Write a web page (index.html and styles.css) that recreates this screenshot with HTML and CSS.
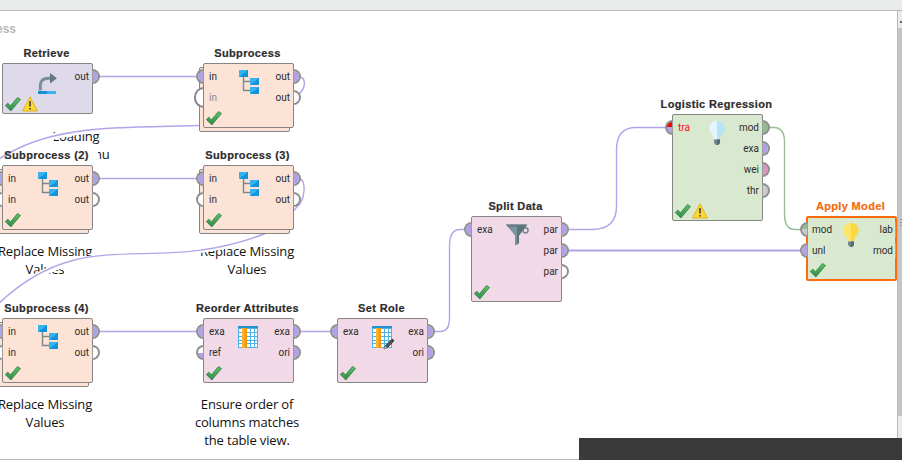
FILE: index.html
```html
<!DOCTYPE html>
<html lang="en">
<head>
<meta charset="utf-8">
<title>Process canvas</title>
<link rel="stylesheet" href="styles.css">
</head>
<body>
<svg class="defs" width="0" height="0" aria-hidden="true">
  <defs>
    <linearGradient id="blue" x1="0" y1="0" x2="1" y2="1"><stop offset=".5" stop-color="#35b3ee"/><stop offset=".5" stop-color="#1394d9"/></linearGradient>
    <linearGradient id="green" x1="0" y1="0" x2="0" y2="1"><stop offset="0" stop-color="#5cc466"/><stop offset="1" stop-color="#338a48"/></linearGradient>
    <symbol id="tree" viewBox="0 0 24 26">
      <path d="M7.5 7v14.5H15M7.5 12.5H15" fill="none" stroke="#7c878c" stroke-width="1.4"/>
      <path d="M3 1h9v7H3z" fill="url(#blue)"/><path d="M14 9h9v7h-9z" fill="url(#blue)"/><path d="M14 18h9v7h-9z" fill="url(#blue)"/>
    </symbol>
    <symbol id="retrieve" viewBox="0 0 24 26">
      <path d="M5.300 21.500v-4.500q0-7.800 8-7.800h2.700" fill="none" stroke="#7b8f99" stroke-width="3"/>
      <path d="M15 4l7 5.200-7 5.200z" fill="#647883"/>
      <path d="M3 22h9v3H3z" fill="#1690d5"/><path d="M12 22h9v3h-9z" fill="#3fb1ed"/>
    </symbol>
    <symbol id="table" viewBox="0 0 24 26">
      <path d="M2 2h20v22H2z" fill="#4db4ea"/><path d="M2 2h20v2H2z" fill="#2393cf"/>
      <g fill="#fff"><path d="M3 5h3v3H3zM3 9h3v3H3zM3 13h3v3H3zM3 17h3v2H3zM3 20h3v3H3z"/><path d="M11 5h3v3h-3zM15 5h3v3h-3zM19 5h2v3h-2zM11 9h3v3h-3zM15 9h3v3h-3zM19 9h2v3h-2zM11 13h3v3h-3zM15 13h3v3h-3zM19 13h2v3h-2zM11 17h3v2h-3zM15 17h3v2h-3zM19 17h2v2h-2zM11 20h3v3h-3zM15 20h3v3h-3zM19 20h2v3h-2z"/></g>
      <path d="M6 4h5v20H6z" fill="#f89a0c"/><path d="M6 4h2.500v20H6z" fill="#fdb12c"/>
    </symbol>
    <symbol id="pencil" viewBox="0 0 12 12">
      <path d="M1 11l1.500-3.500L8.500 1.500l2 2L4.500 9.500z" fill="#56565a" stroke="#333" stroke-width=".8"/><path d="M8.500 1.500l1-.8 1.700 1.600-.7 1.200z" fill="#3a3a3a"/><path d="M1 11l1.200-2.700 1.500 1.500z" fill="#ddd"/>
    </symbol>
    <symbol id="funnel" viewBox="0 0 26 26">
      <circle cx="21.500" cy="8.300" r="2.600" fill="none" stroke="#73878f" stroke-width="1.500"/>
      <path d="M2 2.500H23L15 13.500V21L11 23.800V13.500z" fill="#7b939d"/><path d="M13 3h10l-8 10.500V21L13 22.400z" fill="#5d747e"/><path d="M2 2.500H23l-1.500 2H3.500z" fill="#637983"/>
    </symbol>
    <symbol id="bulb-off" viewBox="0 0 24 26">
      <path d="M12 1C7 1 4.300 4.500 4.300 8.500c0 4.500 4.200 5.500 4.500 10.500H12z" fill="#e3f5fd"/><path d="M12 1c5 0 7.700 3.500 7.700 7.500 0 4.500-4.200 5.500-4.500 10.500H12z" fill="#b5e3f8"/>
      <path d="M9 19.500h6v3.500l-2 2h-2l-2-2z" fill="#71868f"/><path d="M12 19.500h3v3.500l-2 2h-1z" fill="#536872"/>
    </symbol>
    <symbol id="bulb-on" viewBox="0 0 24 26">
      <path d="M12 1C7 1 4.300 4.500 4.300 8.500c0 4.500 4.200 5.500 4.500 10.500H12z" fill="#fee567"/><path d="M12 1c5 0 7.700 3.500 7.700 7.500 0 4.500-4.200 5.500-4.500 10.500H12z" fill="#fbd842"/>
      <path d="M9 19.500h6v3.500l-2 2h-2l-2-2z" fill="#71868f"/><path d="M12 19.500h3v3.500l-2 2h-1z" fill="#536872"/>
    </symbol>
    <symbol id="ok" viewBox="0 0 17 16">
      <path d="M1.300 9.500l2.500-2.300 2.700 2.600 7-8.300 3 2L6.800 15z" fill="url(#green)" stroke="#2f7d42" stroke-width=".8"/>
    </symbol>
    <symbol id="warn" viewBox="0 0 17 16">
      <path d="M9 .8L16.500 15H1.500z" fill="#fdd835" stroke="#e3b220" stroke-width="1" stroke-linejoin="round"/>
      <path d="M9 5v5.500M9 12v1.500" stroke="#4a4a42" stroke-width="1.700"/>
    </symbol>
  </defs>
</svg>

<main class="canvas">
  <div class="breadcrumb">ess</div>

  <p class="note n-load">Loading</p>
  <p class="note n-cut"><span>nu</span></p>
  <p class="note n-2">Replace Missing<br>Values</p>
  <p class="note n-3">Replace Missing<br>Values</p>
  <p class="note n-4">Replace Missing<br>Values</p>
  <p class="note n-5">Ensure order of<br>columns matches<br>the table view.</p>

  <svg class="wires" width="902" height="460" viewBox="0 0 902 460">
    <g class="halo">
      <path d="M198 126C110 128 48 126-4 161"/>
      <path d="M264 234C160 275 80 225-4 306"/>
    </g>
    <g class="wire">
      <path d="M98 76.500H198"/>
      <path d="M300 77C306 78 306 88 299 94C280 120 240 126 198 125.500C110 128 48 125-4 161"/>
      <path d="M98 178.500H198"/>
      <path d="M300 179C306 180 306 200 296 208C286 221 276 229 264 234C150 278 85 220-4 306"/>
      <path d="M98 331.500H198M299 331.500H332"/>
      <path d="M434 331.500H440Q449.500 331.500 449.500 318V246Q449.500 229.500 460 229.500H466"/>
      <path d="M567 229.500H592Q616.500 229.500 616.500 206V150Q616.500 127.500 636 127.500H667"/>
      <path class="thick" d="M567 250.500H801"/>
      <path class="model" d="M768 127.500H774Q784.500 127.500 784.500 142V214Q784.500 229.500 795 229.500H801"/>
    </g>
  </svg>

  <section class="node retrieve" style="left:2px;top:63px">
    <h2>Retrieve</h2>
    <div class="box"><div class="ins"></div><div class="outs"><div class="port">out<i></i></div></div>
      <svg class="icon"><use href="#retrieve"/></svg><div class="status"><svg><use href="#ok"/></svg><svg><use href="#warn"/></svg></div></div>
  </section>

  <section class="node sub" style="left:203px;top:63px">
    <h2>Subprocess</h2><div class="back"></div>
    <div class="box"><div class="ins"><div class="port"><i></i>in</div><div class="port muted"><i class="big"></i>in</div></div><div class="outs"><div class="port">out<i></i></div><div class="port">out<i class="open"></i></div></div>
      <svg class="icon"><use href="#tree"/></svg><div class="status"><svg><use href="#ok"/></svg></div></div>
  </section>

  <section class="node sub" style="left:2px;top:165px">
    <h2>Subprocess (2)</h2><div class="back"></div>
    <div class="box"><div class="ins"><div class="port"><i></i>in</div><div class="port"><i class="open"></i>in</div></div><div class="outs"><div class="port">out<i></i></div><div class="port">out<i class="open"></i></div></div>
      <svg class="icon"><use href="#tree"/></svg><div class="status"><svg><use href="#ok"/></svg></div></div>
  </section>

  <section class="node sub" style="left:203px;top:165px">
    <h2>Subprocess (3)</h2><div class="back"></div>
    <div class="box"><div class="ins"><div class="port"><i></i>in</div><div class="port"><i class="open"></i>in</div></div><div class="outs"><div class="port">out<i></i></div><div class="port">out<i class="open"></i></div></div>
      <svg class="icon"><use href="#tree"/></svg><div class="status"><svg><use href="#ok"/></svg></div></div>
  </section>

  <section class="node sub" style="left:2px;top:318px">
    <h2>Subprocess (4)</h2><div class="back"></div>
    <div class="box"><div class="ins"><div class="port"><i></i>in</div><div class="port"><i class="open"></i>in</div></div><div class="outs"><div class="port">out<i></i></div><div class="port">out<i class="open"></i></div></div>
      <svg class="icon"><use href="#tree"/></svg><div class="status"><svg><use href="#ok"/></svg></div></div>
  </section>

  <section class="node data" style="left:203px;top:318px">
    <h2>Reorder Attributes</h2>
    <div class="box"><div class="ins"><div class="port"><i></i>exa</div><div class="port"><i class="half"></i>ref</div></div><div class="outs"><div class="port">exa<i></i></div><div class="port">ori<i></i></div></div>
      <svg class="icon"><use href="#table"/></svg><div class="status"><svg><use href="#ok"/></svg></div></div>
  </section>

  <section class="node data" style="left:337px;top:318px">
    <h2>Set Role</h2>
    <div class="box"><div class="ins"><div class="port"><i></i>exa</div></div><div class="outs"><div class="port">exa<i></i></div><div class="port">ori<i></i></div></div>
      <svg class="icon"><use href="#table"/></svg><svg class="edit"><use href="#pencil"/></svg><div class="status"><svg><use href="#ok"/></svg></div></div>
  </section>

  <section class="node data split" style="left:471px;top:216px">
    <h2>Split Data</h2>
    <div class="box"><div class="ins"><div class="port"><i></i>exa</div></div><div class="outs"><div class="port">par<i></i></div><div class="port">par<i></i></div><div class="port">par<i class="open"></i></div></div>
      <svg class="icon wide"><use href="#funnel"/></svg><div class="status"><svg><use href="#ok"/></svg></div></div>
  </section>

  <section class="node learner regression" style="left:672px;top:114px">
    <h2>Logistic Regression</h2>
    <div class="box"><div class="ins"><div class="port error"><i></i>tra</div></div><div class="outs"><div class="port">mod<i class="mod"></i></div><div class="port">exa<i></i></div><div class="port">wei<i class="wei"></i></div><div class="port">thr<i class="thr"></i></div></div>
      <svg class="icon"><use href="#bulb-off"/></svg><div class="status"><svg><use href="#ok"/></svg><svg><use href="#warn"/></svg></div></div>
  </section>

  <section class="node learner selected" style="left:806px;top:216px">
    <h2>Apply Model</h2>
    <div class="box"><div class="ins"><div class="port"><i class="modhalf"></i>mod</div><div class="port"><i></i>unl</div></div><div class="outs"><div class="port">lab<i></i></div><div class="port">mod<i></i></div></div>
      <svg class="icon"><use href="#bulb-on"/></svg><div class="status"><svg><use href="#ok"/></svg></div></div>
  </section>
</main>

<aside class="scrollbar"><div class="button"></div><div class="thumb"><b></b><b></b><b></b></div></aside>
<div class="overlay"></div>
</body>
</html>
```
FILE: styles.css
```css
* { box-sizing: border-box; }
body {
  margin: 0; width: 902px; height: 460px; overflow: hidden; position: relative;
  display: grid; grid-template-columns: 897px 5px; background: #fff;
  border-top: 10px solid #e8ebea;
  font-family: Roboto, "Liberation Sans", sans-serif;
}
.defs { position: absolute; }
.canvas { height: 450px; border-top: 1px solid #b7b9b8; border-bottom: 1px solid #b7b9b8; overflow: hidden; }
.breadcrumb { padding-top: 10px; margin-left: -4px; font: bold 12px/16px "Liberation Sans", sans-serif; color: #b8b8b8; }

/* Canvas items are placed in window coordinates; the body border is 10px. */
.wires { position: absolute; left: 0; top: -10px; }
.halo path { fill: none; stroke: #fff; stroke-width: 6; }
.wire path { fill: none; stroke: #b3a4ea; stroke-width: 1.4; }
.wire .thick { stroke-width: 1.8; }
.wire .model { stroke: #97bd92; }

.note { position: absolute; margin: 0; font: 13px/18px "Open Sans", "Noto Sans", sans-serif; color: #111; text-align: center; white-space: nowrap; width: 120px; letter-spacing: -.15px; }
.n-load { left: 16px; top: 117px; }
.n-cut { left: 98px; top: 135px; width: 11px; overflow: hidden; text-align: left; }
.n-cut span { margin-left: -4px; }
.n-2 { left: -15px; top: 232px; }
.n-3 { left: 187px; top: 232px; }
.n-4 { left: -15px; top: 385px; }
.n-5 { left: 187px; top: 385px; }

.node { position: absolute; width: 91px; height: 65px; margin-top: -10px; --fill: #fde3d6; --line: #858585; }
.node h2 { position: absolute; left: -32px; right: -30px; top: -17px; margin: 0; text-align: center; font: bold 11px/14px "Liberation Sans", sans-serif; letter-spacing: .35px; color: #2c2c2c; -webkit-text-stroke: .2px; }
.box, .back { background: var(--fill); border: 1px solid var(--line); border-radius: 2px; width: 100%; height: 100%; }
.back { position: absolute; left: -4px; top: 4px; }
.box { position: relative; padding-top: 2px; display: flex; justify-content: space-between; align-items: flex-start; }
.retrieve { height: 51px; --fill: #dedaea; }
.data { --fill: #f1d9e7; }
.split { height: 86px; }
.learner { --fill: #d9e9cf; }
.regression { height: 107px; }

.port { display: flex; align-items: center; gap: 5px; height: 21px; font-size: 10px; line-height: 12px; color: #2c2c2c; }
.outs .port { justify-content: flex-end; gap: 3px; }
.port i { flex: none; width: 8px; height: 15px; background: #b1a2e8; background-clip: padding-box; border: 2px solid #909090; }
.ins i { margin-left: -8px; border-radius: 8px 0 0 8px; border-right: 1px solid #9c9c9c; }
.outs i { margin-right: -8px; border-radius: 0 8px 8px 0; border-left: 1px solid #9c9c9c; }
.port .open { background: #fff; }
.port .big { width: 10px; height: 21px; margin-left: -10px; border-radius: 10px 0 0 10px; background: #fff; border-color: #858585; }
.muted { color: #888; }
.port .half { background: linear-gradient(#fff 50%, #b1a2e8 50%); }
.port .mod { background: #93bd8c; }
.port .wei { background: #dc96c0; }
.port .thr { background: #cbcbcb; }
.port .modhalf { background: linear-gradient(#93bd8c 50%, #cbcbcb 50%); }
.port.error { color: #f01414; }
.port.error i { background: linear-gradient(#f00 50%, #b1a2e8 50%); }

.icon { position: absolute; left: 32px; top: 5px; width: 24px; height: 26px; }
.icon.wide { width: 26px; }
.edit { position: absolute; left: 45px; top: 19px; width: 12px; height: 12px; }
.status { position: absolute; left: 1px; bottom: 1px; display: flex; }
.status svg { width: 17px; height: 16px; }

.selected { --line: #ff6a0a; }
.selected h2 { color: #f56a0c; }
.selected .box { border-width: 2px; padding-top: 1px; }
.selected .icon { left: 31px; top: 4px; }
.selected .port { gap: 4px; }
.selected .outs .port { gap: 2px; }
.selected .outs i { width: 1px; border: 0; border-radius: 0; margin-right: -1px; background: #a5a5a5; }

.scrollbar { height: 450px; background: #e8ebea; border-top: 1px solid #b7b9b8; border-left: 1px solid #b7b9b8; }
.button { height: 17px; display: flex; align-items: center; justify-content: flex-end; padding-top: 5px; }
.button::after { content: ""; width: 2px; height: 2px; background: #666; }
.thumb { height: 388px; background: #c4c6c5; display: flex; flex-direction: column; align-items: flex-end; justify-content: center; gap: 2px; }
.thumb b { width: 2px; height: 1px; background: #8e8e8e; }
.overlay { position: absolute; left: 579px; top: 428px; width: 323px; height: 22px; background: #3a3a3a; }
```
